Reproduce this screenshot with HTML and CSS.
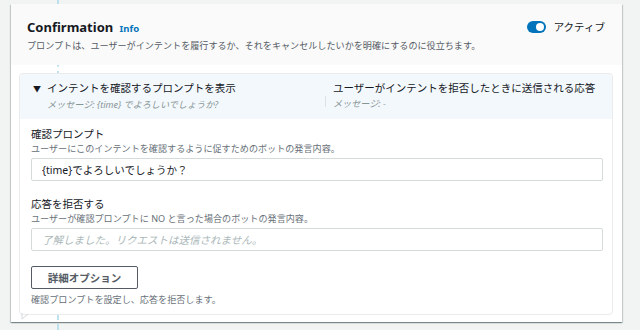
FILE: index.html
```html
<!DOCTYPE html>
<html lang="ja">
<head>
  <meta charset="UTF-8">
  <meta name="viewport" content="width=device-width, initial-scale=1.0">
  <title>Confirmation</title>
  <link rel="stylesheet" href="styles.css">
</head>
<body>
  <div class="canvas">
    <!-- flow connector behind the card -->
    <div class="connector"></div>

    <section class="card">
      <header class="card-head">
        <div class="head-text">
          <h2 class="title">Confirmation <a class="info" href="#">Info</a></h2>
          <p class="subtitle">プロンプトは、ユーザーがインテントを履行するか、それをキャンセルしたいかを明確にするのに役立ちます。</p>
        </div>
        <label class="toggle">
          <span class="switch"></span>
          アクティブ
        </label>
      </header>

      <div class="card-body">
        <div class="bubble">
          <div class="bubble-head">
            <div class="col">
              <div class="col-title"><span class="caret">▼</span>インテントを確認するプロンプトを表示</div>
              <div class="col-sub">メッセージ: {time} でよろしいでしょうか?</div>
            </div>
            <div class="col col-right">
              <div class="col-title">ユーザーがインテントを拒否したときに送信される応答</div>
              <div class="col-sub">メッセージ: -</div>
            </div>
          </div>

          <div class="bubble-body">
            <div class="field">
              <label class="field-label" for="confirmPrompt">確認プロンプト</label>
              <div class="field-desc">ユーザーにこのインテントを確認するように促すためのボットの発言内容。</div>
              <input class="field-input" id="confirmPrompt" type="text" value="{time}でよろしいでしょうか？">
            </div>

            <div class="field">
              <label class="field-label" for="declineResponse">応答を拒否する</label>
              <div class="field-desc">ユーザーが確認プロンプトに NO と言った場合のボットの発言内容。</div>
              <input class="field-input" id="declineResponse" type="text" placeholder="了解しました。リクエストは送信されません。">
            </div>

            <button class="btn-options" type="button">詳細オプション</button>
            <p class="footnote">確認プロンプトを設定し、応答を拒否します。</p>
          </div>

          <!-- speech bubble tail -->
          <svg class="tail" width="8" height="7" viewBox="0 0 8 7">
            <polyline points="1,0 1,6 7,1" fill="none" stroke="#d5dbdb" stroke-width="1"/>
          </svg>
        </div>
      </div>
    </section>
  </div>
</body>
</html>
```

FILE: styles.css
```css
/* General */
body {
  margin: 0;
  background-color: #f2f3f3;
  font-family: "Noto Sans", "Noto Sans CJK JP", sans-serif;
  color: #16191f;
}

.canvas {
  position: relative;
  height: 330px;
  padding: 4px 18px 0 11px;
  box-sizing: border-box;
  overflow: hidden;
}

.connector {
  position: absolute;
  left: 57px;
  top: 0;
  bottom: 0;
  border-left: 2px dashed #bde2ed;
  z-index: 1;
}

/* Card */
.card {
  width: 611px;
  height: 318px;
  background-color: #fff;
  box-shadow: 0 1px 1px rgba(0, 28, 36, 0.3), 1px 1px 1px rgba(0, 28, 36, 0.15), -1px 1px 1px rgba(0, 28, 36, 0.15);
  box-sizing: border-box;
}

.card-head {
  position: relative;
  z-index: 2;
  height: 61px;
  padding: 14px 17px 0 16px;
  box-sizing: border-box;
  background-color: #fafafa;
  display: flex;
  justify-content: space-between;
  align-items: flex-start;
}

.title {
  margin: 0;
  font-size: 13px;
  line-height: 18px;
  font-weight: 700;
  color: #16191f;
}

.info {
  margin-left: 3px;
  font-size: 9.5px;
  font-weight: 700;
  color: #0073bb;
  text-decoration: none;
}

.subtitle {
  margin: 1px 0 0;
  font-size: 9.1px;
  line-height: 14px;
  color: #545b64;
}

.toggle {
  display: flex;
  align-items: center;
  gap: 8px;
  margin-top: 2px;
  font-size: 10.5px;
  line-height: 14px;
  color: #16191f;
}

.switch {
  position: relative;
  width: 19px;
  height: 12px;
  border-radius: 6px;
  background-color: #0073bb;
}

.switch::after {
  content: "";
  position: absolute;
  right: 2px;
  top: 2px;
  width: 8px;
  height: 8px;
  border-radius: 50%;
  background-color: #fff;
}

/* Bubble */
.card-body {
  padding: 8px 9px 9px 8px;
}

.bubble {
  position: relative;
  z-index: 2;
  border: 1px solid #e9ebed;
  border-radius: 4px;
  background-color: #fff;
}

.bubble-head {
  display: grid;
  grid-template-columns: 292px 1fr;
  padding: 6px 10px 6px 13px;
  background-color: #f3f8fc;
  border-radius: 4px 4px 0 0;
}

.col-title {
  font-size: 10.5px;
  line-height: 16px;
  color: #16191f;
  white-space: nowrap;
}

.caret {
  display: inline-block;
  width: 14px;
  font-size: 8px;
  color: #16191f;
}

.col-sub {
  padding-left: 14px;
  font-size: 9.1px;
  line-height: 16px;
  font-style: italic;
  color: #879596;
}

.col-right {
  position: relative;
  padding-left: 8px;
}

.col-right::before {
  content: "";
  position: absolute;
  left: 0;
  top: 16px;
  height: 11px;
  border-left: 1px solid #dde3e5;
}

.col-right .col-sub {
  padding-left: 0;
}

.bubble-body {
  padding: 7px 9px 7px 11px;
}

.field + .field {
  margin-top: 15px;
}

.field-label {
  display: block;
  font-size: 10.5px;
  line-height: 16px;
  color: #16191f;
}

.field-desc {
  font-size: 9.1px;
  line-height: 14px;
  color: #687078;
}

.field-input {
  display: block;
  width: 100%;
  height: 23px;
  margin-top: 2px;
  padding: 0 10px;
  border: 1px solid #d5dbdb;
  border-radius: 2px;
  box-sizing: border-box;
  font-family: inherit;
  font-size: 10.5px;
  color: #16191f;
  background-color: #fff;
}

.field-input::placeholder {
  font-style: italic;
  color: #aab7b8;
}

.btn-options {
  display: block;
  width: 107px;
  height: 23px;
  margin-top: 15px;
  padding: 0;
  border: 1px solid #545b64;
  border-radius: 2px;
  background-color: #fff;
  font-family: inherit;
  font-size: 10.5px;
  font-weight: 700;
  color: #545b64;
  cursor: pointer;
}

.footnote {
  margin: 4px 0 0;
  font-size: 9.1px;
  line-height: 14px;
  color: #687078;
}

.tail {
  position: absolute;
  left: 1px;
  bottom: -6px;
}
```
